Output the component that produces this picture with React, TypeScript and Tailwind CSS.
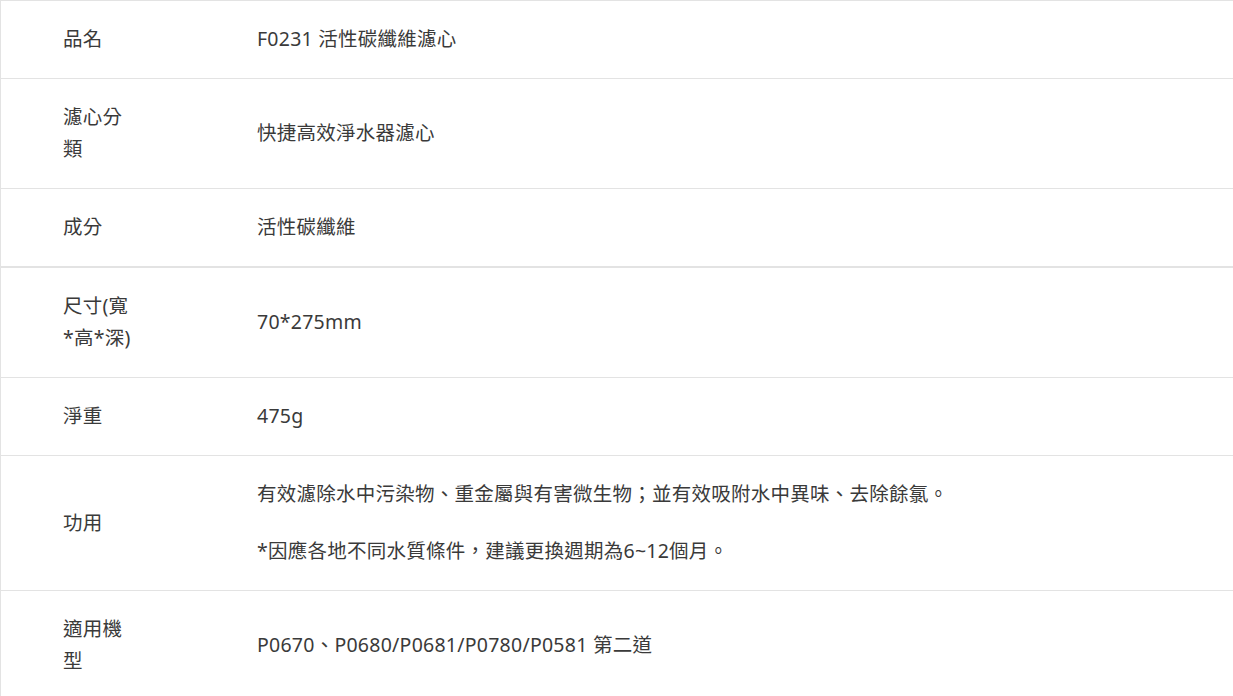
const ROWS: { label: string; value: string[] }[] = [
  { label: '品名', value: ['F0231 活性碳纖維濾心'] },
  { label: '濾心分類', value: ['快捷高效淨水器濾心'] },
  { label: '成分', value: ['活性碳纖維'] },
  { label: '尺寸(寬*高*深)', value: ['70*275mm'] },
  { label: '淨重', value: ['475g'] },
  {
    label: '功用',
    value: [
      '有效濾除水中污染物、重金屬與有害微生物；並有效吸附水中異味、去除餘氯。',
      '*因應各地不同水質條件，建議更換週期為6~12個月。',
    ],
  },
  { label: '適用機型', value: ['P0670、P0680/P0681/P0780/P0581 第二道'] },
];

export default function App() {
  return (
    <div
      className="min-h-[696px] bg-white text-[#3a3a3a] text-[19.5px] leading-[32px] tracking-[0.25px]"
      style={{ fontFamily: '"Noto Sans", "Noto Sans CJK TC", sans-serif' }}
    >
      <div className="border-l border-[#e3e3e3]">
        {ROWS.map((row, i) => (
          <div
            key={row.label}
            className={`flex items-center border-[#e3e3e3] ${i === 3 ? 'border-t-2' : 'border-t'}`}
          >
            <div className="w-[256px] shrink-0 pl-[62px] pr-[120px] pt-[22px] pb-[23px] break-all">{row.label}</div>
            <div className="flex-1 pt-[22px] pb-[23px] flex flex-col gap-[25px]">
              {row.value.map((v) => (
                <p key={v}>{v}</p>
              ))}
            </div>
          </div>
        ))}
      </div>
    </div>
  );
}
